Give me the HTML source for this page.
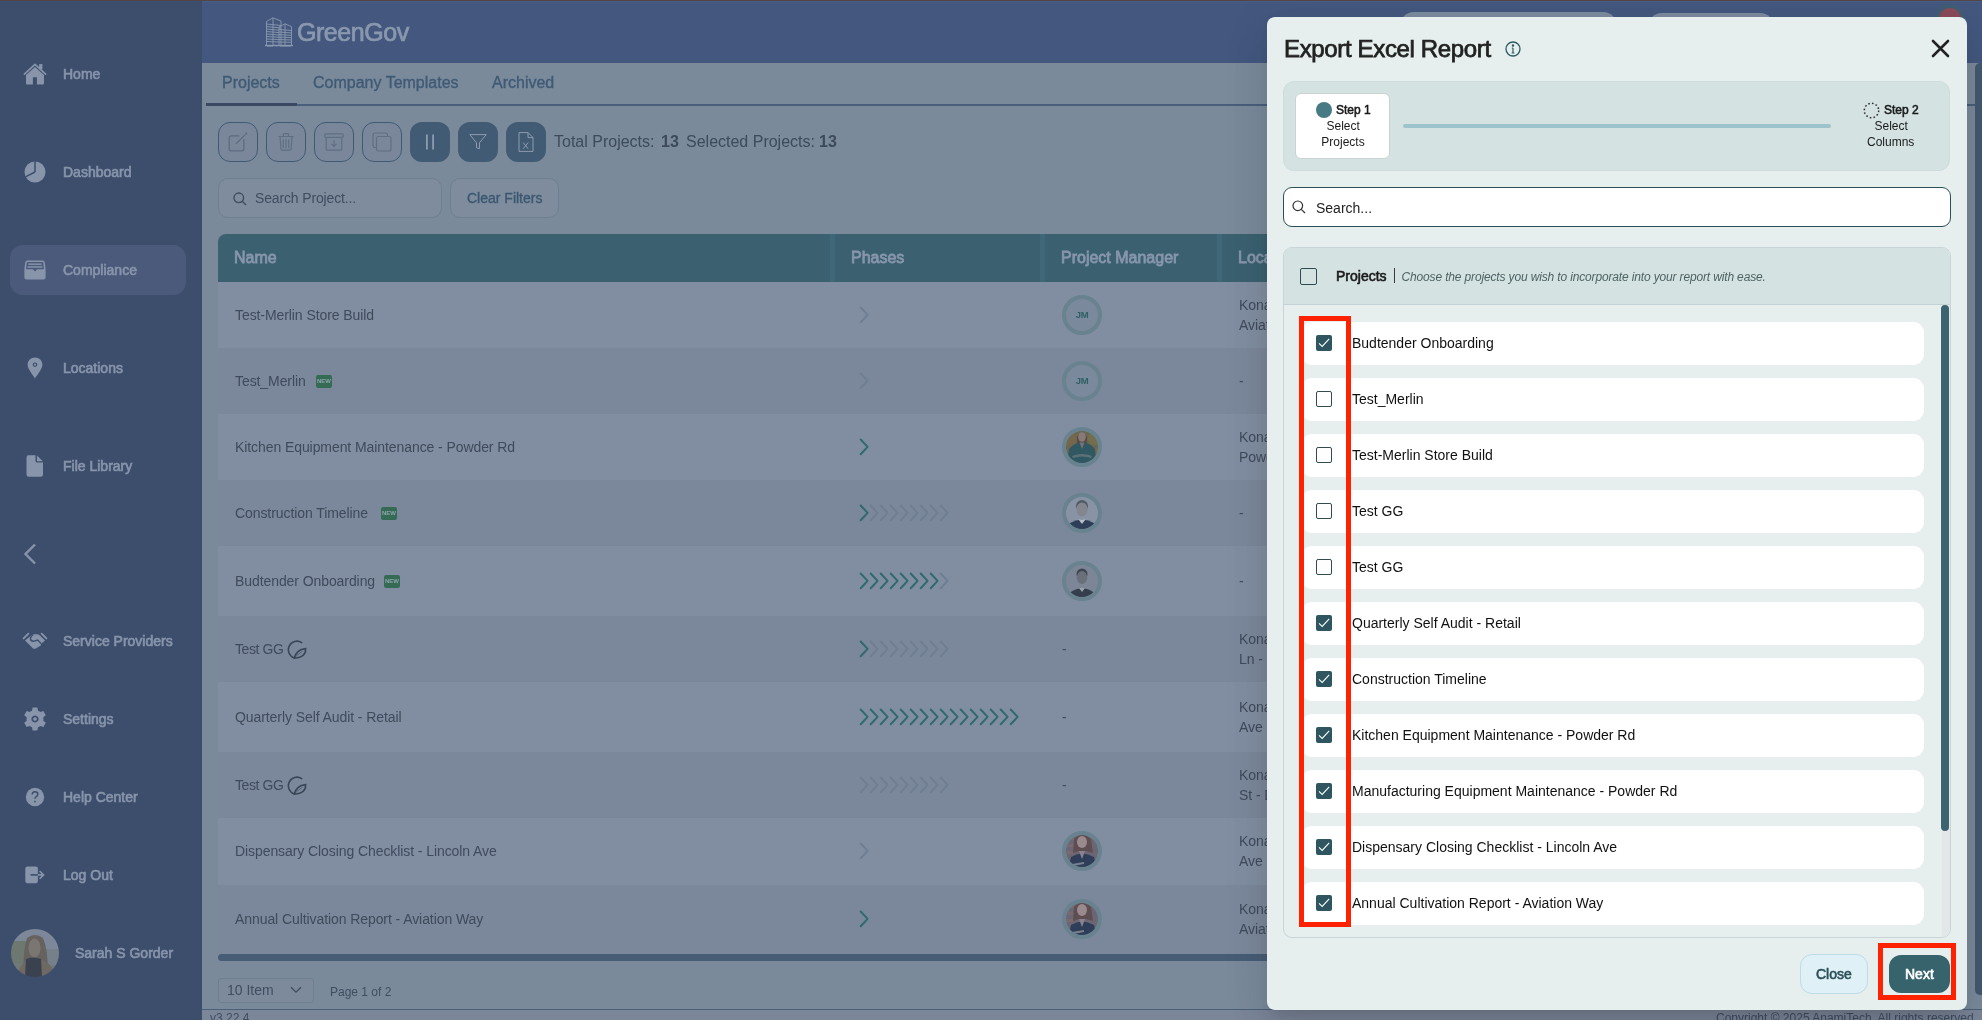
<!DOCTYPE html>
<html><head><meta charset="utf-8">
<style>
*{box-sizing:border-box;margin:0;padding:0}
html,body{width:1982px;height:1020px;overflow:hidden;font-family:"Liberation Sans",sans-serif;background:#7a8a9b;position:relative}
.abs{position:absolute}
.t{position:absolute;white-space:nowrap}
#topline{left:0;top:0;width:1982px;height:2px;background:#5a4a5a}
#sidebar{left:0;top:0;width:202px;height:1020px;background:#3d4e6d}
.sb{font-size:14px;line-height:16px;font-weight:normal;color:#8794aa;-webkit-text-stroke:0.65px #8794aa}
#hdr{left:202px;top:0;width:1780px;height:63px;background:#44587f}
#main{left:202px;top:63px;width:1780px;height:957px;background:#7a8a9b;overflow:hidden}
.tab{font-size:16px;line-height:18px;color:#3f5a74;-webkit-text-stroke:0.35px #3f5a74}
.ob{width:40px;height:40px;border-radius:12px;border:1.5px solid #3f5b74;background:#7a879a;display:flex;align-items:center;justify-content:center}
.fb{width:40px;height:40px;border-radius:12px;background:#405b73;display:flex;align-items:center;justify-content:center}
.th{font-size:16px;line-height:18px;font-weight:normal;color:#8796ab;-webkit-text-stroke:0.8px #8796ab}
.rn{font-size:14px;line-height:16px;color:#3f4a5c;letter-spacing:-0.08px}
.badge{width:16px;height:13px;background:#356b55;color:#8fa3ab;font-size:6px;line-height:13px;text-align:center;border-radius:2px;font-weight:bold;letter-spacing:0}
.av{width:40px;height:40px;border-radius:50%;border:4px solid #68838f;padding-bottom:1px;display:flex;align-items:center;justify-content:center}
.av span{font-size:9.5px;font-weight:bold;color:#2f6064;letter-spacing:-0.3px}
#modal{left:1267px;top:17px;width:700px;height:993px;background:#e6efee;border-radius:8px;box-shadow:0 11px 15px -7px rgba(0,0,0,.12),0 24px 38px 3px rgba(0,0,0,.07),0 9px 46px 8px rgba(0,0,0,.05)}
.sl{font-size:12px;line-height:14px;color:#1a1a1a}
</style></head><body>
<div id="wrap" style="position:absolute;left:0;top:0;width:1982px;height:1020px;will-change:transform"><!--wrapstart--><div class="abs" id="sidebar">
 <div class="abs" style="left:10px;top:245px;width:176px;height:50px;border-radius:13px;background:#4b5a7a"></div>
 <!-- Home -->
 <svg class="abs" style="left:20px;top:60px" width="30" height="30" viewBox="0 0 30 30"><path d="M4.4 14.1 L15 4.4 L25.6 14.1" fill="none" stroke="#8794aa" stroke-width="1.7" stroke-linecap="round" stroke-linejoin="round"/><rect x="19.1" y="4.1" width="3.3" height="5.2" fill="#8794aa"/><path d="M15 6.9 L24 15 L24 23.6 Q24 24.4 23.2 24.4 L16.9 24.4 L16.9 17.2 L12.9 17.2 L12.9 24.4 L6.8 24.4 Q6 24.4 6 23.6 L6 15 Z" fill="#8794aa"/></svg>
 <div class="t sb" style="left:63px;top:66px">Home</div>
 <!-- Dashboard pie -->
 <svg class="abs" style="left:24px;top:161px" width="22" height="22" viewBox="0 0 22 22"><circle cx="11" cy="11" r="10.5" fill="#8794aa"/><path d="M11 11 L11 0 M11 11 L1.5 15.8" stroke="#3d4e6d" stroke-width="1.5" fill="none"/></svg>
 <div class="t sb" style="left:63px;top:164px">Dashboard</div>
 <!-- Compliance inbox -->
 <svg class="abs" style="left:24px;top:260px" width="22" height="20" viewBox="0 0 22 20"><path fill="#8794aa" d="M3.5 0.5 L18.5 0.5 Q20.5 0.5 20.8 2.5 L21.6 9 L21.6 17.5 Q21.6 19.5 19.6 19.5 L2.4 19.5 Q0.4 19.5 0.4 17.5 L0.4 9 L1.2 2.5 Q1.5 0.5 3.5 0.5 Z M3.8 2 Q2.8 2 2.7 3 L2.1 9.2 L8.8 9.2 L11 11.6 L13.2 9.2 L19.9 9.2 L19.3 3 Q19.2 2 18.2 2 Z"/><rect x="4.4" y="3.4" width="13.2" height="1.5" fill="#8794aa"/><rect x="3.6" y="6.2" width="14.8" height="1.5" fill="#8794aa"/></svg>
 <div class="t sb" style="left:63px;top:262px">Compliance</div>
 <!-- Locations pin -->
 <svg class="abs" style="left:27px;top:357px" width="16" height="22" viewBox="0 0 16 22"><path fill="#8794aa" fill-rule="evenodd" d="M8 0.5 C3.8 0.5 0.6 3.6 0.6 7.6 C0.6 12 5.5 17.5 8 21.5 C10.5 17.5 15.4 12 15.4 7.6 C15.4 3.6 12.2 0.5 8 0.5 Z M8 5.4 A2.3 2.3 0 1 0 8.01 5.4 Z M8 6.6 A1.1 1.1 0 1 1 7.99 6.6 Z"/></svg>
 <div class="t sb" style="left:63px;top:360px">Locations</div>
 <!-- File -->
 <svg class="abs" style="left:26px;top:455px" width="18" height="22" viewBox="0 0 18 22"><path fill="#8794aa" d="M2.5 0.2 L9.5 0.2 L9.5 6 Q9.5 7.6 11.1 7.6 L17 7.6 L17 19.5 Q17 21.8 14.7 21.8 L2.8 21.8 Q0.5 21.8 0.5 19.5 L0.5 2.5 Q0.5 0.2 2.5 0.2 Z M11 0.6 L16.8 6.2 L11 6.2 Z"/></svg>
 <div class="t sb" style="left:63px;top:458px">File Library</div>
 <!-- chevron -->
 <svg class="abs" style="left:23px;top:543px" width="14" height="22" viewBox="0 0 14 22"><path d="M12 1.5 L2.5 11 L12 20.5" fill="none" stroke="#8794aa" stroke-width="2.4"/></svg>
 <!-- Handshake -->
 <svg class="abs" style="left:20px;top:626px" width="30" height="30" viewBox="0 0 30 30"><path d="M3.6 12.4 L8.4 7.6 M21.6 7.6 L26.4 12.4" stroke="#8794aa" stroke-width="1.8" stroke-linecap="round"/><path d="M5 14.4 L12.4 8.6 Q15 7.9 17.2 8.3 Q19 8.6 20.2 9.8 L25 14.4 L21.2 17.8 L20.8 19.4 L15.8 22.6 Q14 23.3 12.8 22.2 Z" fill="#8794aa"/><path d="M13.2 8.4 Q10.2 10.8 10.4 13 Q11 15.6 14.2 15.2 L17.6 14.1 L21.3 17.8" fill="none" stroke="#3d4e6d" stroke-width="1.3"/></svg>
 <div class="t sb" style="left:63px;top:633px">Service Providers</div>
 <!-- gear -->
 <svg class="abs" style="left:23px;top:707px" width="24" height="24" viewBox="0 0 24 24"><path fill="#8794aa" fill-rule="evenodd" d="M9.6 0.6 L14.4 0.6 L15 3.8 Q16.3 4.3 17.3 5.1 L20.4 4 L22.8 8.2 L20.3 10.3 Q20.5 12 20.3 13.7 L22.8 15.8 L20.4 20 L17.3 18.9 Q16.3 19.7 15 20.2 L14.4 23.4 L9.6 23.4 L9 20.2 Q7.7 19.7 6.7 18.9 L3.6 20 L1.2 15.8 L3.7 13.7 Q3.5 12 3.7 10.3 L1.2 8.2 L3.6 4 L6.7 5.1 Q7.7 4.3 9 3.8 Z M12 8.4 A3.6 3.6 0 1 0 12.01 8.4 Z M12 10.2 A1.8 1.8 0 1 1 11.99 10.2 Z"/></svg>
 <div class="t sb" style="left:63px;top:711px">Settings</div>
 <!-- help -->
 <svg class="abs" style="left:25px;top:787px" width="20" height="20" viewBox="0 0 20 20"><circle cx="10" cy="10" r="9.2" fill="#8794aa"/><path d="M7.2 7.6 Q7.2 4.8 10 4.8 Q12.8 4.8 12.8 7.3 Q12.8 8.8 11.2 9.6 Q10 10.3 10 11.8" fill="none" stroke="#3d4e6d" stroke-width="1.4"/><circle cx="10" cy="14.6" r="0.9" fill="#3d4e6d"/></svg>
 <div class="t sb" style="left:63px;top:789px">Help Center</div>
 <!-- logout -->
 <svg class="abs" style="left:25px;top:866px" width="21" height="18" viewBox="0 0 21 18"><rect x="0.3" y="0.6" width="12.6" height="16.6" rx="2.2" fill="#8794aa"/><path d="M5.5 8.9 L18.5 8.9 M14.6 5 L18.6 8.9 L14.6 12.8" fill="none" stroke="#8794aa" stroke-width="1.6"/><path d="M5.5 8.9 L12.9 8.9" stroke="#3d4e6d" stroke-width="1.6"/></svg>
 <div class="t sb" style="left:63px;top:867px">Log Out</div>
 <!-- avatar -->
 <svg class="abs" style="left:11px;top:929px" width="48" height="48" viewBox="0 0 48 48"><defs><clipPath id="sav"><circle cx="24" cy="24" r="24"/></clipPath><filter id="blr"><feGaussianBlur stdDeviation="0.7"/></filter></defs>
 <g clip-path="url(#sav)"><g filter="url(#blr)">
 <rect width="48" height="48" fill="#7d879a"/>
 <rect x="0" y="12" width="18" height="22" fill="#6d7870"/><rect x="0" y="34" width="48" height="14" fill="#717a78"/>
 <rect x="34" y="20" width="14" height="16" fill="#76808a"/>
 <path d="M12.5 46 Q12 20 16 9 Q24 3 32 9 Q37 20 37 46 Z" fill="#66625f"/>
 <ellipse cx="23.5" cy="19" rx="6" ry="9.5" fill="#7b7672"/>
 <path d="M6 48 Q8 36 16 31 L31 31 Q42 35 45 48 Z" fill="#6e6963"/>
 <path d="M14 48 L15 30 Q22 27 30 30 L31 48 Z" fill="#3a424f"/>
 </g></g></svg>
 <div class="t sb" style="left:75px;top:945px">Sarah S Gorder</div>
</div>
<div class="abs" id="hdr">
 <svg class="abs" style="left:63px;top:17px" width="28" height="30" viewBox="0 0 28 30" fill="none" stroke="#8a98ae" stroke-width="0.9">
  <path d="M1.5 28 L1.5 4.5 L8 0.8 L16 4 L16 28"/><path d="M8 0.8 L8 28"/>
  <path d="M14 28 L14 10 L20 6.8 L26.5 9.6 L26.5 28"/><path d="M20 6.8 L20 28"/>
  <path d="M1.5 7 L16 8.5 M1.5 9.5 L16 11 M1.5 12 L14 13.2 M1.5 14.5 L14 15.6 M1.5 17 L14 18 M1.5 19.5 L14 20.3 M1.5 22 L14 22.6 M1.5 24.5 L14 25"/>
  <path d="M14 12.5 L26.5 13.5 M14 15 L26.5 16 M14 17.5 L26.5 18.4 M14 20 L26.5 20.7 M14 22.5 L26.5 23 M14 25 L26.5 25.3"/>
  <path d="M0 28.5 L28 28.5" stroke-width="1.4"/><path d="M2 30 L8 30 M11 30 L12 30 M15 30 L26 30" stroke-width="1"/>
 </svg>
 <div class="t" style="left:95px;top:17px;font-size:25px;font-weight:normal;-webkit-text-stroke:0.7px #8a98ae;color:#8a98ae;letter-spacing:-0.45px;line-height:30px">GreenGov</div>
 <!-- hidden pills behind modal -->
 <div class="abs" style="left:1198px;top:12px;width:217px;height:40px;border-radius:14px;background:#7d8ba0"></div>
 <div class="abs" style="left:1446px;top:13px;width:126px;height:40px;border-radius:14px;background:#7d8ba0"></div>
 <div class="abs" style="left:1733px;top:4px;width:30px;height:30px;border-radius:50%;background:#415e74"></div>
 <div class="abs" style="left:1737px;top:8px;width:22px;height:22px;border-radius:50%;background:#8a4a5a"></div>
</div>
<div class="abs" id="main">
 <!-- tabs -->
 <div class="t tab" style="left:20px;top:11px">Projects</div>
 <div class="t tab" style="left:111px;top:11px">Company Templates</div>
 <div class="t tab" style="left:290px;top:11px">Archived</div>
 <div class="abs" style="left:4px;top:41px;width:1776px;height:1.5px;background:#4a5f7c"></div>
 <div class="abs" style="left:4px;top:39.5px;width:91px;height:3px;background:#3b4a62"></div>
 <!-- toolbar -->
 <div class="abs ob" style="left:16px;top:59px"><svg width="24" height="24" viewBox="0 0 24 24" fill="none" stroke="#5d6c81" stroke-width="1.3" stroke-linecap="round"><path d="M13 5.9 L5.2 5.9 Q3.2 5.9 3.2 7.9 L3.2 18.8 Q3.2 20.8 5.2 20.8 L15.9 20.8 Q17.9 20.8 17.9 18.8 L17.9 10"/><path d="M10.4 13.5 L18.7 5.1"/><circle cx="20.2" cy="3.7" r="0.5" fill="#5d6c81"/></svg></div>
 <div class="abs ob" style="left:64px;top:59px"><svg width="16" height="18" viewBox="0 0 16 18" fill="none" stroke="#5f6f84" stroke-width="1.2"><path d="M0.5 3.5 L15.5 3.5 M5.5 3.5 L5.5 1.5 Q5.5 0.7 6.3 0.7 L9.7 0.7 Q10.5 0.7 10.5 1.5 L10.5 3.5 M2 3.5 L3 16.3 Q3.1 17.2 4 17.2 L12 17.2 Q12.9 17.2 13 16.3 L14 3.5 M5.3 6.5 L5.3 15 M8 6.5 L8 15 M10.7 6.5 L10.7 15"/></svg></div>
 <div class="abs ob" style="left:112px;top:59px"><svg width="20" height="18" viewBox="0 0 20 18" fill="none" stroke="#5f6f84" stroke-width="1.2"><rect x="0.8" y="0.8" width="18.4" height="3.6" rx="1"/><path d="M2.2 4.4 L2.2 16.3 Q2.2 17.2 3 17.2 L17 17.2 Q17.8 17.2 17.8 16.3 L17.8 4.4 M10 7.5 L10 13.5 M7.5 11 L10 13.5 L12.5 11"/></svg></div>
 <div class="abs ob" style="left:160px;top:59px"><svg width="20" height="20" viewBox="0 0 20 20" fill="none" stroke="#5f6f84" stroke-width="1.2"><path d="M4 15.5 L3 15.5 Q1 15.5 1 13.5 L1 3 Q1 1 3 1 L13.5 1 Q15.5 1 15.5 3 L15.5 4"/><rect x="4.5" y="4.5" width="14.5" height="14.5" rx="2"/></svg></div>
 <div class="abs fb" style="left:208px;top:59px"><svg width="12" height="16" viewBox="0 0 12 16"><rect x="2" y="0.5" width="1.8" height="15" fill="#8d9bb0"/><rect x="8.2" y="0.5" width="1.8" height="15" fill="#8d9bb0"/></svg></div>
 <div class="abs fb" style="left:256px;top:59px"><svg width="18" height="16" viewBox="0 0 18 16" fill="none" stroke="#8d9bb0" stroke-width="1"><path d="M0.8 0.6 L17.2 0.6 L10.5 8.8 L10.5 14.6 L7.5 13.8 L7.5 8.8 Z"/></svg></div>
 <div class="abs fb" style="left:304px;top:59px"><svg width="16" height="20" viewBox="0 0 16 20" fill="none" stroke="#8d9bb0" stroke-width="1"><path d="M1 0.6 L10 0.6 L15 5.6 L15 19.4 L1 19.4 Z M10 0.6 L10 5.6 L15 5.6"/><path d="M5.2 10.5 L10.2 16.8 M10.2 10.5 L5.2 16.8"/></svg></div>
 <div class="t" style="left:352px;top:70px;font-size:16px;color:#3d4a5c;line-height:18px">Total Projects:</div>
 <div class="t" style="left:459px;top:70px;font-size:16px;color:#3d4a5c;line-height:18px;font-weight:bold">13</div>
 <div class="t" style="left:484px;top:70px;font-size:16px;color:#3d4a5c;line-height:18px">Selected Projects:</div>
 <div class="t" style="left:617px;top:70px;font-size:16px;color:#3d4a5c;line-height:18px;font-weight:bold">13</div>
 <!-- search -->
 <div class="abs" style="left:16px;top:115px;width:224px;height:40px;border-radius:10px;border:1px solid #6f7f92;background:#7f8c9e"></div>
 <svg class="abs" style="left:31px;top:129px" width="14" height="14" viewBox="0 0 14 14" fill="none" stroke="#3f4d60" stroke-width="1.4"><circle cx="5.8" cy="5.8" r="4.8"/><path d="M9.3 9.3 L13 13"/></svg>
 <div class="t" style="left:53px;top:127px;font-size:14px;color:#3f4d60;line-height:16px;letter-spacing:-0.15px">Search Project...</div>
 <div class="abs" style="left:248px;top:115px;width:109px;height:40px;border-radius:10px;border:1px solid #6f7f92;background:#7f8c9e"></div>
 <div class="t" style="left:265px;top:127px;font-size:14px;color:#3b5770;line-height:16px;-webkit-text-stroke:0.35px #3b5770">Clear Filters</div>
 <!-- table -->
 <div class="abs" style="left:16px;top:171px;width:1064px;height:48px;background:#3b6171;border-radius:8px 0 0 0"></div>
 <div class="abs" style="left:628px;top:171px;width:5px;height:48px;background:#3e6877"></div>
 <div class="abs" style="left:838px;top:171px;width:5px;height:48px;background:#3e6877"></div>
 <div class="abs" style="left:1015px;top:171px;width:5px;height:48px;background:#3e6877"></div>
 <div class="t th" style="left:32px;top:186px">Name</div>
 <div class="t th" style="left:649px;top:186px">Phases</div>
 <div class="t th" style="left:859px;top:186px">Project Manager</div>
 <div class="t th" style="left:1036px;top:186px">Location</div>
 <div class="abs" style="left:16px;top:219px;width:1064px;height:66px;background:#818ea1"></div>
<div class="t rn" style="left:33px;top:244.2px">Test-Merlin Store Build</div>
<svg class="abs" style="left:657px;top:243px" width="14" height="18" viewBox="0 0 14 18"><path d="M1.7 1.5 L8.6 8.9 L1.7 16.3" fill="none" stroke="#6f7e93" stroke-width="2" stroke-linecap="round" stroke-linejoin="round"/></svg>
<div class="abs av" style="left:860px;top:232px;background:#7a899c"><span>JM</span></div>
<div class="t rn" style="left:1037px;top:234.2px">Kona Blvd</div>
<div class="t rn" style="left:1037px;top:254.2px">Aviation Way</div>
<div class="abs" style="left:16px;top:285px;width:1064px;height:66px;background:#7b889b"></div>
<div class="t rn" style="left:33px;top:310.2px">Test_Merlin</div>
<div class="abs badge" style="left:114px;top:312px">NEW</div>
<svg class="abs" style="left:657px;top:309px" width="14" height="18" viewBox="0 0 14 18"><path d="M1.7 1.5 L8.6 8.9 L1.7 16.3" fill="none" stroke="#6f7e93" stroke-width="2" stroke-linecap="round" stroke-linejoin="round"/></svg>
<div class="abs av" style="left:860px;top:298px;background:#7a899c"><span>JM</span></div>
<div class="t rn" style="left:1037px;top:310.2px">-</div>
<div class="abs" style="left:16px;top:351px;width:1064px;height:66px;background:#818ea1"></div>
<div class="t rn" style="left:33px;top:376.2px">Kitchen Equipment Maintenance - Powder Rd</div>
<svg class="abs" style="left:657px;top:375px" width="14" height="18" viewBox="0 0 14 18"><path d="M1.7 1.5 L8.6 8.9 L1.7 16.3" fill="none" stroke="#2e6b6e" stroke-width="2" stroke-linecap="round" stroke-linejoin="round"/></svg>
<svg class="abs" style="left:860px;top:364px" width="40" height="40" viewBox="0 0 40 40"><defs><clipPath id="c_w1_2"><circle cx="20" cy="20" r="16.2"/></clipPath></defs><g clip-path="url(#c_w1_2)"><rect width="40" height="40" fill="#6a6754"/><circle cx="7" cy="12" r="7" fill="#77674a"/><circle cx="33" cy="11" r="7" fill="#736f4c"/><circle cx="33" cy="27" r="6" fill="#7a6a44"/><path d="M15 10 Q20 2 25 10 L25 16 L15 16 Z" fill="#5a4a46"/><ellipse cx="20" cy="10" rx="3.8" ry="4.8" fill="#8a7a76"/><path d="M5 40 L7 22 Q12 16 20 15 Q28 16 33 22 L35 40 Z" fill="#2f5862"/><path d="M17.5 15.5 L20 22 L22.5 15.5 Z" fill="#7a7070"/><path d="M10 29 Q20 25 30 29 L29 31 Q20 28 11 31 Z" fill="#5c7078"/></g><circle cx="20" cy="20" r="18" fill="none" stroke="#68838f" stroke-width="4"/></svg>
<div class="t rn" style="left:1037px;top:366.2px">Kona Blvd</div>
<div class="t rn" style="left:1037px;top:386.2px">Powder Rd</div>
<div class="abs" style="left:16px;top:417px;width:1064px;height:66px;background:#7b889b"></div>
<div class="t rn" style="left:33px;top:442.2px">Construction Timeline</div>
<div class="abs badge" style="left:179px;top:444px">NEW</div>
<svg class="abs" style="left:657px;top:441px" width="94" height="18" viewBox="0 0 94 18"><path d="M1.7 1.5 L8.6 8.9 L1.7 16.3" fill="none" stroke="#2e6b6e" stroke-width="2" stroke-linecap="round" stroke-linejoin="round"/><path d="M11.7 1.5 L18.6 8.9 L11.7 16.3" fill="none" stroke="#6f7e93" stroke-width="2" stroke-linecap="round" stroke-linejoin="round"/><path d="M21.7 1.5 L28.6 8.9 L21.7 16.3" fill="none" stroke="#6f7e93" stroke-width="2" stroke-linecap="round" stroke-linejoin="round"/><path d="M31.7 1.5 L38.6 8.9 L31.7 16.3" fill="none" stroke="#6f7e93" stroke-width="2" stroke-linecap="round" stroke-linejoin="round"/><path d="M41.7 1.5 L48.6 8.9 L41.7 16.3" fill="none" stroke="#6f7e93" stroke-width="2" stroke-linecap="round" stroke-linejoin="round"/><path d="M51.7 1.5 L58.6 8.9 L51.7 16.3" fill="none" stroke="#6f7e93" stroke-width="2" stroke-linecap="round" stroke-linejoin="round"/><path d="M61.7 1.5 L68.6 8.9 L61.7 16.3" fill="none" stroke="#6f7e93" stroke-width="2" stroke-linecap="round" stroke-linejoin="round"/><path d="M71.7 1.5 L78.6 8.9 L71.7 16.3" fill="none" stroke="#6f7e93" stroke-width="2" stroke-linecap="round" stroke-linejoin="round"/><path d="M81.7 1.5 L88.6 8.9 L81.7 16.3" fill="none" stroke="#6f7e93" stroke-width="2" stroke-linecap="round" stroke-linejoin="round"/></svg>
<svg class="abs" style="left:860px;top:430px" width="40" height="40" viewBox="0 0 40 40"><defs><clipPath id="c_m1_3"><circle cx="20" cy="20" r="16.2"/></clipPath></defs><g clip-path="url(#c_m1_3)"><rect width="40" height="40" fill="#8894a6"/><ellipse cx="20" cy="13" rx="6" ry="6" fill="#525a66"/><ellipse cx="20" cy="16.5" rx="5.6" ry="7" fill="#84868e"/><path d="M2 40 Q4 28 20 26.5 Q36 28 38 40 Z" fill="#2e3d58"/><path d="M16.5 26.5 L20 31 L23.5 26.5 Z" fill="#b8c0c8"/></g><circle cx="20" cy="20" r="18" fill="none" stroke="#68838f" stroke-width="4"/></svg>
<div class="t rn" style="left:1037px;top:442.2px">-</div>
<div class="abs" style="left:16px;top:483px;width:1064px;height:70px;background:#818ea1"></div>
<div class="t rn" style="left:33px;top:510.2px">Budtender Onboarding</div>
<div class="abs badge" style="left:182px;top:512px">NEW</div>
<svg class="abs" style="left:657px;top:509px" width="94" height="18" viewBox="0 0 94 18"><path d="M1.7 1.5 L8.6 8.9 L1.7 16.3" fill="none" stroke="#2e6b6e" stroke-width="2" stroke-linecap="round" stroke-linejoin="round"/><path d="M11.7 1.5 L18.6 8.9 L11.7 16.3" fill="none" stroke="#2e6b6e" stroke-width="2" stroke-linecap="round" stroke-linejoin="round"/><path d="M21.7 1.5 L28.6 8.9 L21.7 16.3" fill="none" stroke="#2e6b6e" stroke-width="2" stroke-linecap="round" stroke-linejoin="round"/><path d="M31.7 1.5 L38.6 8.9 L31.7 16.3" fill="none" stroke="#2e6b6e" stroke-width="2" stroke-linecap="round" stroke-linejoin="round"/><path d="M41.7 1.5 L48.6 8.9 L41.7 16.3" fill="none" stroke="#2e6b6e" stroke-width="2" stroke-linecap="round" stroke-linejoin="round"/><path d="M51.7 1.5 L58.6 8.9 L51.7 16.3" fill="none" stroke="#2e6b6e" stroke-width="2" stroke-linecap="round" stroke-linejoin="round"/><path d="M61.7 1.5 L68.6 8.9 L61.7 16.3" fill="none" stroke="#2e6b6e" stroke-width="2" stroke-linecap="round" stroke-linejoin="round"/><path d="M71.7 1.5 L78.6 8.9 L71.7 16.3" fill="none" stroke="#2e6b6e" stroke-width="2" stroke-linecap="round" stroke-linejoin="round"/><path d="M81.7 1.5 L88.6 8.9 L81.7 16.3" fill="none" stroke="#6f7e93" stroke-width="2" stroke-linecap="round" stroke-linejoin="round"/></svg>
<svg class="abs" style="left:860px;top:498px" width="40" height="40" viewBox="0 0 40 40"><defs><clipPath id="c_m2_4"><circle cx="20" cy="20" r="16.2"/></clipPath></defs><g clip-path="url(#c_m2_4)"><rect width="40" height="40" fill="#7c8696"/><ellipse cx="20" cy="13" rx="5.5" ry="5.5" fill="#3f4650"/><ellipse cx="20" cy="16.5" rx="5.2" ry="6.5" fill="#6a707a"/><path d="M3 40 Q5 29 20 27 Q35 29 37 40 Z" fill="#343e4c"/><path d="M17 27 L20 31 L23 27 Z" fill="#9aa2ac"/></g><circle cx="20" cy="20" r="18" fill="none" stroke="#68838f" stroke-width="4"/></svg>
<div class="t rn" style="left:1037px;top:510.2px">-</div>
<div class="abs" style="left:16px;top:553px;width:1064px;height:66px;background:#7b889b"></div>
<div class="t rn" style="left:33px;top:578.2px;letter-spacing:-0.4px">Test GG</div>
<svg class="abs" style="left:85px;top:577px" width="20" height="20" viewBox="0 0 20 20" fill="none" stroke="#3a4558" stroke-width="1.6" stroke-linecap="round"><path d="M14.7 2.6 A8.6 8.6 0 1 0 7.4 18"/><path d="M7.4 18 Q9.5 9.5 18.6 8.6 Q19.2 17.5 7.4 18 Z"/><path d="M9.5 15.8 L15 11.5" stroke-width="0.6"/></svg>
<svg class="abs" style="left:657px;top:577px" width="94" height="18" viewBox="0 0 94 18"><path d="M1.7 1.5 L8.6 8.9 L1.7 16.3" fill="none" stroke="#2e6b6e" stroke-width="2" stroke-linecap="round" stroke-linejoin="round"/><path d="M11.7 1.5 L18.6 8.9 L11.7 16.3" fill="none" stroke="#6f7e93" stroke-width="2" stroke-linecap="round" stroke-linejoin="round"/><path d="M21.7 1.5 L28.6 8.9 L21.7 16.3" fill="none" stroke="#6f7e93" stroke-width="2" stroke-linecap="round" stroke-linejoin="round"/><path d="M31.7 1.5 L38.6 8.9 L31.7 16.3" fill="none" stroke="#6f7e93" stroke-width="2" stroke-linecap="round" stroke-linejoin="round"/><path d="M41.7 1.5 L48.6 8.9 L41.7 16.3" fill="none" stroke="#6f7e93" stroke-width="2" stroke-linecap="round" stroke-linejoin="round"/><path d="M51.7 1.5 L58.6 8.9 L51.7 16.3" fill="none" stroke="#6f7e93" stroke-width="2" stroke-linecap="round" stroke-linejoin="round"/><path d="M61.7 1.5 L68.6 8.9 L61.7 16.3" fill="none" stroke="#6f7e93" stroke-width="2" stroke-linecap="round" stroke-linejoin="round"/><path d="M71.7 1.5 L78.6 8.9 L71.7 16.3" fill="none" stroke="#6f7e93" stroke-width="2" stroke-linecap="round" stroke-linejoin="round"/><path d="M81.7 1.5 L88.6 8.9 L81.7 16.3" fill="none" stroke="#6f7e93" stroke-width="2" stroke-linecap="round" stroke-linejoin="round"/></svg>
<div class="t rn" style="left:860px;top:578.2px">-</div>
<div class="t rn" style="left:1037px;top:568.2px">Kona Blvd</div>
<div class="t rn" style="left:1037px;top:588.2px">Ln - Dispensary</div>
<div class="abs" style="left:16px;top:619px;width:1064px;height:70px;background:#818ea1"></div>
<div class="t rn" style="left:33px;top:646.2px">Quarterly Self Audit - Retail</div>
<svg class="abs" style="left:657px;top:645px" width="164" height="18" viewBox="0 0 164 18"><path d="M1.7 1.5 L8.6 8.9 L1.7 16.3" fill="none" stroke="#2e6b6e" stroke-width="2" stroke-linecap="round" stroke-linejoin="round"/><path d="M11.7 1.5 L18.6 8.9 L11.7 16.3" fill="none" stroke="#2e6b6e" stroke-width="2" stroke-linecap="round" stroke-linejoin="round"/><path d="M21.7 1.5 L28.6 8.9 L21.7 16.3" fill="none" stroke="#2e6b6e" stroke-width="2" stroke-linecap="round" stroke-linejoin="round"/><path d="M31.7 1.5 L38.6 8.9 L31.7 16.3" fill="none" stroke="#2e6b6e" stroke-width="2" stroke-linecap="round" stroke-linejoin="round"/><path d="M41.7 1.5 L48.6 8.9 L41.7 16.3" fill="none" stroke="#2e6b6e" stroke-width="2" stroke-linecap="round" stroke-linejoin="round"/><path d="M51.7 1.5 L58.6 8.9 L51.7 16.3" fill="none" stroke="#2e6b6e" stroke-width="2" stroke-linecap="round" stroke-linejoin="round"/><path d="M61.7 1.5 L68.6 8.9 L61.7 16.3" fill="none" stroke="#2e6b6e" stroke-width="2" stroke-linecap="round" stroke-linejoin="round"/><path d="M71.7 1.5 L78.6 8.9 L71.7 16.3" fill="none" stroke="#2e6b6e" stroke-width="2" stroke-linecap="round" stroke-linejoin="round"/><path d="M81.7 1.5 L88.6 8.9 L81.7 16.3" fill="none" stroke="#2e6b6e" stroke-width="2" stroke-linecap="round" stroke-linejoin="round"/><path d="M91.7 1.5 L98.6 8.9 L91.7 16.3" fill="none" stroke="#2e6b6e" stroke-width="2" stroke-linecap="round" stroke-linejoin="round"/><path d="M101.7 1.5 L108.6 8.9 L101.7 16.3" fill="none" stroke="#2e6b6e" stroke-width="2" stroke-linecap="round" stroke-linejoin="round"/><path d="M111.7 1.5 L118.6 8.9 L111.7 16.3" fill="none" stroke="#2e6b6e" stroke-width="2" stroke-linecap="round" stroke-linejoin="round"/><path d="M121.7 1.5 L128.6 8.9 L121.7 16.3" fill="none" stroke="#2e6b6e" stroke-width="2" stroke-linecap="round" stroke-linejoin="round"/><path d="M131.7 1.5 L138.6 8.9 L131.7 16.3" fill="none" stroke="#2e6b6e" stroke-width="2" stroke-linecap="round" stroke-linejoin="round"/><path d="M141.7 1.5 L148.6 8.9 L141.7 16.3" fill="none" stroke="#2e6b6e" stroke-width="2" stroke-linecap="round" stroke-linejoin="round"/><path d="M151.7 1.5 L158.6 8.9 L151.7 16.3" fill="none" stroke="#2e6b6e" stroke-width="2" stroke-linecap="round" stroke-linejoin="round"/></svg>
<div class="t rn" style="left:860px;top:646.2px">-</div>
<div class="t rn" style="left:1037px;top:636.2px">Kona Blvd</div>
<div class="t rn" style="left:1037px;top:656.2px">Ave - Retail</div>
<div class="abs" style="left:16px;top:689px;width:1064px;height:66px;background:#7b889b"></div>
<div class="t rn" style="left:33px;top:714.2px;letter-spacing:-0.4px">Test GG</div>
<svg class="abs" style="left:85px;top:713px" width="20" height="20" viewBox="0 0 20 20" fill="none" stroke="#3a4558" stroke-width="1.6" stroke-linecap="round"><path d="M14.7 2.6 A8.6 8.6 0 1 0 7.4 18"/><path d="M7.4 18 Q9.5 9.5 18.6 8.6 Q19.2 17.5 7.4 18 Z"/><path d="M9.5 15.8 L15 11.5" stroke-width="0.6"/></svg>
<svg class="abs" style="left:657px;top:713px" width="94" height="18" viewBox="0 0 94 18"><path d="M1.7 1.5 L8.6 8.9 L1.7 16.3" fill="none" stroke="#6f7e93" stroke-width="2" stroke-linecap="round" stroke-linejoin="round"/><path d="M11.7 1.5 L18.6 8.9 L11.7 16.3" fill="none" stroke="#6f7e93" stroke-width="2" stroke-linecap="round" stroke-linejoin="round"/><path d="M21.7 1.5 L28.6 8.9 L21.7 16.3" fill="none" stroke="#6f7e93" stroke-width="2" stroke-linecap="round" stroke-linejoin="round"/><path d="M31.7 1.5 L38.6 8.9 L31.7 16.3" fill="none" stroke="#6f7e93" stroke-width="2" stroke-linecap="round" stroke-linejoin="round"/><path d="M41.7 1.5 L48.6 8.9 L41.7 16.3" fill="none" stroke="#6f7e93" stroke-width="2" stroke-linecap="round" stroke-linejoin="round"/><path d="M51.7 1.5 L58.6 8.9 L51.7 16.3" fill="none" stroke="#6f7e93" stroke-width="2" stroke-linecap="round" stroke-linejoin="round"/><path d="M61.7 1.5 L68.6 8.9 L61.7 16.3" fill="none" stroke="#6f7e93" stroke-width="2" stroke-linecap="round" stroke-linejoin="round"/><path d="M71.7 1.5 L78.6 8.9 L71.7 16.3" fill="none" stroke="#6f7e93" stroke-width="2" stroke-linecap="round" stroke-linejoin="round"/><path d="M81.7 1.5 L88.6 8.9 L81.7 16.3" fill="none" stroke="#6f7e93" stroke-width="2" stroke-linecap="round" stroke-linejoin="round"/></svg>
<div class="t rn" style="left:860px;top:714.2px">-</div>
<div class="t rn" style="left:1037px;top:704.2px">Kona Blvd</div>
<div class="t rn" style="left:1037px;top:724.2px">St - Dispensary</div>
<div class="abs" style="left:16px;top:755px;width:1064px;height:67px;background:#818ea1"></div>
<div class="t rn" style="left:33px;top:780.2px">Dispensary Closing Checklist - Lincoln Ave</div>
<svg class="abs" style="left:657px;top:779px" width="14" height="18" viewBox="0 0 14 18"><path d="M1.7 1.5 L8.6 8.9 L1.7 16.3" fill="none" stroke="#6f7e93" stroke-width="2" stroke-linecap="round" stroke-linejoin="round"/></svg>
<svg class="abs" style="left:860px;top:768px" width="40" height="40" viewBox="0 0 40 40"><defs><clipPath id="c_w2_8"><circle cx="20" cy="20" r="16.2"/></clipPath></defs><g clip-path="url(#c_w2_8)"><rect width="40" height="40" fill="#6c6674"/><rect x="2" y="6" width="10" height="3" fill="#7a6a6e"/><rect x="4" y="13" width="10" height="3" fill="#786870"/><rect x="2" y="20" width="9" height="3" fill="#7a6a6e"/><path d="M12 8 Q20 0 29 8 L31 22 L24 20 L17 20 L11 22 Z" fill="#5e4e52"/><ellipse cx="20" cy="11" rx="5" ry="6" fill="#9a8a8e"/><path d="M6 40 L9 26 Q20 19 32 26 L35 40 Z" fill="#2e3e58"/><path d="M17 20 L20 28 L23 20 Z" fill="#8a8290"/><path d="M10 33 L22 31 L22 33 L11 35 Z" fill="#7a8090"/></g><circle cx="20" cy="20" r="18" fill="none" stroke="#68838f" stroke-width="4"/></svg>
<div class="t rn" style="left:1037px;top:770.2px">Kona Blvd</div>
<div class="t rn" style="left:1037px;top:790.2px">Ave - Lincoln</div>
<div class="abs" style="left:16px;top:822px;width:1064px;height:70px;background:#7b889b"></div>
<div class="t rn" style="left:33px;top:848.2px">Annual Cultivation Report - Aviation Way</div>
<svg class="abs" style="left:657px;top:847px" width="14" height="18" viewBox="0 0 14 18"><path d="M1.7 1.5 L8.6 8.9 L1.7 16.3" fill="none" stroke="#2e6b6e" stroke-width="2" stroke-linecap="round" stroke-linejoin="round"/></svg>
<svg class="abs" style="left:860px;top:836px" width="40" height="40" viewBox="0 0 40 40"><defs><clipPath id="c_w2_9"><circle cx="20" cy="20" r="16.2"/></clipPath></defs><g clip-path="url(#c_w2_9)"><rect width="40" height="40" fill="#6c6674"/><rect x="2" y="6" width="10" height="3" fill="#7a6a6e"/><rect x="4" y="13" width="10" height="3" fill="#786870"/><rect x="2" y="20" width="9" height="3" fill="#7a6a6e"/><path d="M12 8 Q20 0 29 8 L31 22 L24 20 L17 20 L11 22 Z" fill="#5e4e52"/><ellipse cx="20" cy="11" rx="5" ry="6" fill="#9a8a8e"/><path d="M6 40 L9 26 Q20 19 32 26 L35 40 Z" fill="#2e3e58"/><path d="M17 20 L20 28 L23 20 Z" fill="#8a8290"/><path d="M10 33 L22 31 L22 33 L11 35 Z" fill="#7a8090"/></g><circle cx="20" cy="20" r="18" fill="none" stroke="#68838f" stroke-width="4"/></svg>
<div class="t rn" style="left:1037px;top:838.2px">Kona Blvd</div>
<div class="t rn" style="left:1037px;top:858.2px">Aviation Way</div>
 <div class="abs" style="left:16px;top:891px;width:1064px;height:7px;background:#475d76;border-radius:4px 0 0 4px"></div>
 <!-- pagination -->
 <div class="abs" style="left:16px;top:915px;width:96px;height:25px;border-radius:3px;border:1px solid #6f7f92;background:#7c8a9c"></div>
 <div class="t" style="left:25px;top:919px;font-size:14px;color:#3f4d60;line-height:16px">10 Item</div>
 <svg class="abs" style="left:88px;top:923px" width="12" height="8" viewBox="0 0 12 8" fill="none" stroke="#3f4d60" stroke-width="1.3"><path d="M1 1.2 L6 6.2 L11 1.2"/></svg>
 <div class="t" style="left:128px;top:922px;font-size:12px;color:#3f4d60;line-height:14px">Page 1 of 2</div>
 <div class="abs" style="left:0px;top:946px;width:1780px;height:1px;background:#4a607a"></div><div class="abs" style="left:0px;top:947px;width:1780px;height:10px;background:#7b8699"></div>
 <div class="t" style="left:8px;top:948px;font-size:12px;color:#3f4d60;line-height:14px">v3.22.4</div>
 <div class="t" style="left:1514px;top:948px;font-size:12px;color:#3f4d60;line-height:14px">Copyright © 2025 AnamiTech. All rights reserved.</div>
 <div class="abs" style="left:1773px;top:0px;width:12px;height:932px;background:#435970;border-radius:5px"></div>
</div>
<div class="abs" style="left:0;top:1010px;width:1982px;height:10px"></div>
<div class="abs" id="modal">
<div class="t" style="left:17px;top:18.2px;font-size:24px;line-height:28px;font-weight:normal;-webkit-text-stroke:0.75px #222;color:#222;letter-spacing:-0.35px">Export Excel Report</div>
<svg class="abs" style="left:238px;top:24px" width="16" height="16" viewBox="0 0 16 16" fill="none" stroke="#2f5a64" stroke-width="1.3"><circle cx="8" cy="8" r="7"/><path d="M8 7 L8 12 M6.6 12 L9.4 12 M6.8 7 L8 7" stroke-width="1.2"/><circle cx="8" cy="4.6" r="0.6" fill="#2f5a64"/></svg>
<svg class="abs" style="left:664px;top:22px" width="19" height="19" viewBox="0 0 19 19" fill="none" stroke="#222" stroke-width="2.6" stroke-linecap="round"><path d="M2 2 L17 17 M17 2 L2 17"/></svg>
<div class="abs" style="left:16px;top:64px;width:667px;height:90px;border-radius:11px;background:#d4e2e2;border:1px solid #cddcdc"></div>
<div class="abs" style="left:28px;top:76px;width:95px;height:66px;border-radius:6px;background:#fff;border:1px solid #c9d3d3"></div>
<div class="abs" style="left:49px;top:85px;width:16px;height:16px;border-radius:50%;background:#477a84"></div>
<div class="t sl" style="left:69px;top:85.5px;-webkit-text-stroke:0.55px #1a1a1a">Step 1</div>
<div class="t sl" style="left:59.5px;top:101.8px">Select</div>
<div class="t sl" style="left:54.299999999999955px;top:117.6px">Projects</div>
<div class="abs" style="left:136px;top:107px;width:428px;height:4px;border-radius:2px;background:#9dc4cc"></div>
<svg class="abs" style="left:596px;top:85px" width="17" height="17" viewBox="0 0 17 17"><circle cx="8.5" cy="8.5" r="7.2" fill="none" stroke="#333" stroke-width="1.5" stroke-dasharray="1.6 2.2"/></svg>
<div class="t sl" style="left:617px;top:85.5px;-webkit-text-stroke:0.55px #1a1a1a">Step 2</div>
<div class="t sl" style="left:607.5px;top:101.8px">Select</div>
<div class="t sl" style="left:600px;top:117.6px">Columns</div>
<div class="abs" style="left:16px;top:170px;width:668px;height:40px;border-radius:9px;background:#fff;border:1px solid #2c4f57"></div>
<svg class="abs" style="left:25px;top:183px" width="14" height="14" viewBox="0 0 14 14" fill="none" stroke="#333" stroke-width="1.2"><circle cx="5.8" cy="5.8" r="4.8"/><path d="M9.3 9.3 L13 13"/></svg>
<div class="t" style="left:49px;top:182.5px;font-size:14px;line-height:16px;color:#222">Search...</div>
<div class="abs" style="left:16px;top:230px;width:668px;height:691px;border-radius:9px;border:1px solid #c7d5d8;background:#e6efee;overflow:hidden">
<div class="abs" style="left:0;top:0;width:668px;height:57px;background:#d4e2e2;border-bottom:1px solid #c3d2d6"></div>
<div class="abs" style="left:16px;top:20px;width:17px;height:17px;border:1.5px solid #2f4a50;border-radius:2px;background:transparent"></div>
<div class="t" style="left:52px;top:20.3px;font-size:14px;line-height:16px;color:#1a1a1a;-webkit-text-stroke:0.6px #1a1a1a">Projects</div>
<div class="abs" style="left:110px;top:20px;width:1.2px;height:15px;background:#3a3a3a"></div>
<div class="t" style="left:117.5px;top:21.5px;font-size:12px;line-height:14px;font-style:italic;color:#4f6263;letter-spacing:-0.15px">Choose the projects you wish to incorporate into your report with ease.</div>
<div class="abs" style="left:658px;top:57px;width:8px;height:633px;background:#e3e7e8"></div>
<div class="abs" style="left:657px;top:57px;width:8px;height:526px;border-radius:4px;background:#3b6470"></div>
<div class="abs" style="left:17px;top:73.5px;width:623px;height:43px;border-radius:11px;background:#fff"></div>
<svg class="abs" style="left:32px;top:87.0px" width="16" height="16" viewBox="0 0 16 16"><rect x="0" y="0" width="16" height="16" rx="2" fill="#2e5560"/><path d="M3 8.4 L6.2 11.4 L13.2 3.9" fill="none" stroke="#fff" stroke-width="1.1"/></svg>
<div class="t" style="left:68px;top:87.3px;font-size:14px;line-height:16px;color:#111">Budtender Onboarding</div>
<div class="abs" style="left:17px;top:129.5px;width:623px;height:43px;border-radius:11px;background:#fff"></div>
<div class="abs" style="left:32px;top:143.0px;width:16px;height:16px;border:1.5px solid #2f4a50;border-radius:2px"></div>
<div class="t" style="left:68px;top:143.3px;font-size:14px;line-height:16px;color:#111">Test_Merlin</div>
<div class="abs" style="left:17px;top:185.5px;width:623px;height:43px;border-radius:11px;background:#fff"></div>
<div class="abs" style="left:32px;top:199.0px;width:16px;height:16px;border:1.5px solid #2f4a50;border-radius:2px"></div>
<div class="t" style="left:68px;top:199.3px;font-size:14px;line-height:16px;color:#111">Test-Merlin Store Build</div>
<div class="abs" style="left:17px;top:241.5px;width:623px;height:43px;border-radius:11px;background:#fff"></div>
<div class="abs" style="left:32px;top:255.0px;width:16px;height:16px;border:1.5px solid #2f4a50;border-radius:2px"></div>
<div class="t" style="left:68px;top:255.4px;font-size:14px;line-height:16px;color:#111">Test GG</div>
<div class="abs" style="left:17px;top:297.5px;width:623px;height:43px;border-radius:11px;background:#fff"></div>
<div class="abs" style="left:32px;top:311.0px;width:16px;height:16px;border:1.5px solid #2f4a50;border-radius:2px"></div>
<div class="t" style="left:68px;top:311.4px;font-size:14px;line-height:16px;color:#111">Test GG</div>
<div class="abs" style="left:17px;top:353.5px;width:623px;height:43px;border-radius:11px;background:#fff"></div>
<svg class="abs" style="left:32px;top:367.0px" width="16" height="16" viewBox="0 0 16 16"><rect x="0" y="0" width="16" height="16" rx="2" fill="#2e5560"/><path d="M3 8.4 L6.2 11.4 L13.2 3.9" fill="none" stroke="#fff" stroke-width="1.1"/></svg>
<div class="t" style="left:68px;top:367.4px;font-size:14px;line-height:16px;color:#111">Quarterly Self Audit - Retail</div>
<div class="abs" style="left:17px;top:409.5px;width:623px;height:43px;border-radius:11px;background:#fff"></div>
<svg class="abs" style="left:32px;top:423.0px" width="16" height="16" viewBox="0 0 16 16"><rect x="0" y="0" width="16" height="16" rx="2" fill="#2e5560"/><path d="M3 8.4 L6.2 11.4 L13.2 3.9" fill="none" stroke="#fff" stroke-width="1.1"/></svg>
<div class="t" style="left:68px;top:423.4px;font-size:14px;line-height:16px;color:#111">Construction Timeline</div>
<div class="abs" style="left:17px;top:465.5px;width:623px;height:43px;border-radius:11px;background:#fff"></div>
<svg class="abs" style="left:32px;top:479.0px" width="16" height="16" viewBox="0 0 16 16"><rect x="0" y="0" width="16" height="16" rx="2" fill="#2e5560"/><path d="M3 8.4 L6.2 11.4 L13.2 3.9" fill="none" stroke="#fff" stroke-width="1.1"/></svg>
<div class="t" style="left:68px;top:479.4px;font-size:14px;line-height:16px;color:#111">Kitchen Equipment Maintenance - Powder Rd</div>
<div class="abs" style="left:17px;top:521.5px;width:623px;height:43px;border-radius:11px;background:#fff"></div>
<svg class="abs" style="left:32px;top:535.0px" width="16" height="16" viewBox="0 0 16 16"><rect x="0" y="0" width="16" height="16" rx="2" fill="#2e5560"/><path d="M3 8.4 L6.2 11.4 L13.2 3.9" fill="none" stroke="#fff" stroke-width="1.1"/></svg>
<div class="t" style="left:68px;top:535.4px;font-size:14px;line-height:16px;color:#111">Manufacturing Equipment Maintenance - Powder Rd</div>
<div class="abs" style="left:17px;top:577.5px;width:623px;height:43px;border-radius:11px;background:#fff"></div>
<svg class="abs" style="left:32px;top:591.0px" width="16" height="16" viewBox="0 0 16 16"><rect x="0" y="0" width="16" height="16" rx="2" fill="#2e5560"/><path d="M3 8.4 L6.2 11.4 L13.2 3.9" fill="none" stroke="#fff" stroke-width="1.1"/></svg>
<div class="t" style="left:68px;top:591.4px;font-size:14px;line-height:16px;color:#111">Dispensary Closing Checklist - Lincoln Ave</div>
<div class="abs" style="left:17px;top:633.5px;width:623px;height:43px;border-radius:11px;background:#fff"></div>
<svg class="abs" style="left:32px;top:647.0px" width="16" height="16" viewBox="0 0 16 16"><rect x="0" y="0" width="16" height="16" rx="2" fill="#2e5560"/><path d="M3 8.4 L6.2 11.4 L13.2 3.9" fill="none" stroke="#fff" stroke-width="1.1"/></svg>
<div class="t" style="left:68px;top:647.4px;font-size:14px;line-height:16px;color:#111">Annual Cultivation Report - Aviation Way</div>
</div>
<div class="abs" style="left:32px;top:299px;width:52px;height:611px;border:5px solid #ff2200"></div>
<div class="abs" style="left:533px;top:937px;width:68px;height:40px;border-radius:12px;background:#dff1f6;border:1px solid #bcdce6"></div>
<div class="t" style="left:549px;top:949.0px;font-size:14px;line-height:16px;color:#2c5058;-webkit-text-stroke:0.6px #2c5058">Close</div>
<div class="abs" style="left:622px;top:938px;width:61px;height:38px;border-radius:12px;background:#37636d"></div>
<div class="t" style="left:638px;top:949.0px;font-size:14px;line-height:16px;color:#fff;-webkit-text-stroke:0.6px #fff">Next</div>
<div class="abs" style="left:611px;top:926px;width:78px;height:57px;border:5px solid #ff2200"></div>
</div>
<div class="abs" style="left:0;top:0;width:1982px;height:1px;background:#524547"></div><div class="abs" style="left:202px;top:1px;width:1780px;height:1px;background:#485c86"></div>
</div>
</body></html>
